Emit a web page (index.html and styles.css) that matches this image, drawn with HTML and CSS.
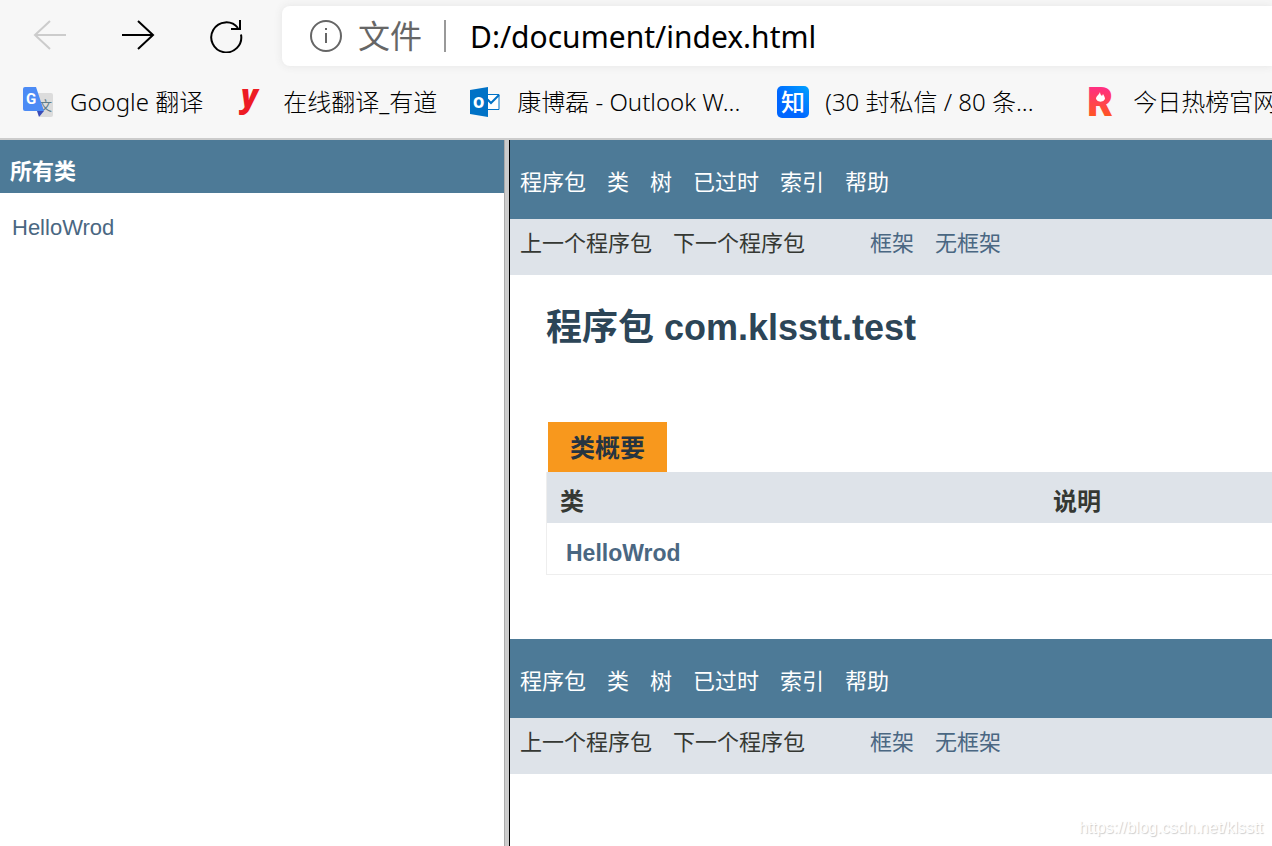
FILE: index.html
```html
<!DOCTYPE html>
<html lang="zh-CN">
<head>
  <meta charset="UTF-8" />
  <meta name="viewport" content="width=device-width, initial-scale=1.0"/>
  <title>com.klsstt.test</title>
  <link rel="stylesheet" href="styles.css">
</head>
<body>
  <header class="browser">
    <div class="toolbar">
      <button class="tool-btn" type="button" aria-label="后退" disabled>
        <svg width="34" height="34" viewBox="0 0 34 34"><path d="M33 16H2M17 2L2 16l15 14"/></svg>
      </button>
      <button class="tool-btn" type="button" aria-label="前进">
        <svg width="34" height="34" viewBox="0 0 34 34"><path d="M1 16h31M17 2l15 14-15 14"/></svg>
      </button>
      <button class="tool-btn" type="button" aria-label="刷新">
        <svg width="34" height="34" viewBox="0 0 34 34"><path d="M32 15.500a15 15 0 1 1-3-6.500M31 1v9h-9"/></svg>
      </button>
      <div class="address">
        <svg class="info" width="34" height="34" viewBox="0 0 34 34"><circle cx="17" cy="17" r="15"/><path d="M17 14v10M17 9v2"/></svg>
        <label for="url">文件</label>
        <input type="text" id="url" value="D:/document/index.html" />
      </div>
    </div>

    <nav class="bookmarks">
      <a href="#">
        <svg width="32" height="32" viewBox="0 0 32 32">
          <path d="M12 7h17a2 2 0 0 1 2 2v20a2 2 0 0 1-2 2H18z" fill="#dcdcdc"/>
          <text x="17" y="24" class="wen">文</text>
          <path d="M15 25h7l-5 6z" fill="#3a4cb8"/>
          <path d="M3 1h11l8 24H3a2 2 0 0 1-2-2V3a2 2 0 0 1 2-2z" fill="#4c8bf5"/>
          <text x="4" y="18" class="g">G</text>
        </svg>
        <span>Google 翻译</span>
      </a>
      <a href="#">
        <svg width="32" height="32" viewBox="0 0 32 32"><text x="6" y="21" class="youdao">y</text></svg>
        <span>在线翻译_有道</span>
      </a>
      <a class="clipped" href="#">
        <svg width="32" height="32" viewBox="0 0 32 32">
          <path d="M15 8.500h15v15H15" fill="#fff" stroke="#0072c6"/>
          <path d="M17 12l5 5 8-8" fill="none" stroke="#0072c6" stroke-width="2"/>
          <path d="M1 4l18-3v30L1 28z" fill="#0072c6"/>
          <text x="4" y="22" class="outlook">o</text>
        </svg>
        <span>康博磊 - Outlook W...</span>
      </a>
      <a class="clipped" href="#">
        <svg width="32" height="32" viewBox="0 0 32 32">
          <defs>
            <linearGradient id="zhi" x1="1" y1="0" x2="0" y2="1"><stop offset="0" stop-color="#00a2ff"/><stop offset="0.600" stop-color="#0066ff"/></linearGradient>
          </defs>
          <rect width="32" height="32" rx="5" fill="url(#zhi)"/>
          <text x="4" y="25" class="zhihu">知</text>
        </svg>
        <span>(30 封私信 / 80 条...</span>
      </a>
      <a href="#">
        <svg width="32" height="32" viewBox="0 0 32 32">
          <defs>
            <linearGradient id="hot" gradientUnits="userSpaceOnUse" x1="0" y1="2" x2="0" y2="30"><stop offset="0" stop-color="#ff3080"/><stop offset="1" stop-color="#ff5524"/></linearGradient>
          </defs>
          <text x="2" y="30" class="hot">R</text>
          <rect x="8" y="5" width="14" height="14" rx="4" fill="url(#hot)"/>
          <path d="M15 6c0 2 1 3 2 4l1-2c1 2 2 3 2 5a5 5 0 0 1-9 0c0-3 3-4 4-7z" fill="#fff"/>
        </svg>
        <span>今日热榜官网</span>
      </a>
    </nav>
  </header>

  <div class="frames">
    <aside class="classes">
      <h2>所有类</h2>
      <ul>
        <li><a href="#">HelloWrod</a></li>
      </ul>
    </aside>

    <main class="package">
      <nav class="top-nav">
        <a href="#">程序包</a>
        <a href="#">类</a>
        <a href="#">树</a>
        <a href="#">已过时</a>
        <a href="#">索引</a>
        <a href="#">帮助</a>
      </nav>
      <div class="sub-nav">
        <span>上一个程序包</span>
        <span>下一个程序包</span>
        <a class="frame-link" href="#">框架</a>
        <a href="#">无框架</a>
      </div>

      <div class="content">
        <h1>程序包 com.klsstt.test</h1>
        <table>
          <caption><span>类概要</span></caption>
          <thead>
            <tr><th class="col-first">类</th><th>说明</th></tr>
          </thead>
          <tbody>
            <tr><td><a href="#">HelloWrod</a></td><td></td></tr>
          </tbody>
        </table>
      </div>

      <nav class="top-nav">
        <a href="#">程序包</a>
        <a href="#">类</a>
        <a href="#">树</a>
        <a href="#">已过时</a>
        <a href="#">索引</a>
        <a href="#">帮助</a>
      </nav>
      <div class="sub-nav">
        <span>上一个程序包</span>
        <span>下一个程序包</span>
        <a class="frame-link" href="#">框架</a>
        <a href="#">无框架</a>
      </div>
    </main>
  </div>

  <div class="watermark">https://blog.csdn.net/klsstt</div>
</body>
</html>
```
FILE: styles.css
```css
* {
  box-sizing: border-box;
}

body {
  margin: 0;
  min-height: 100vh;
  display: flex;
  flex-direction: column;
  overflow: hidden;
  background: #fff;
  color: #353833;
  font-family: "Liberation Sans", "Noto Sans CJK SC", sans-serif;
  font-size: 22px;
}

a {
  color: #4a6782;
  text-decoration: none;
}

/* browser bar */
.browser {
  background: #f7f7f7;
  border-bottom: 2px solid #ccc;
  font-family: "Noto Sans", "Noto Sans CJK SC", sans-serif;
}

.toolbar {
  display: flex;
  align-items: center;
  height: 72px;
  padding-left: 33px;
}

.tool-btn {
  width: 34px;
  height: 34px;
  margin-right: 54px;
  padding: 0;
  border: none;
  background: none;
}

.tool-btn:last-of-type {
  margin-right: 39px;
}

.tool-btn svg,
.info {
  display: block;
  fill: none;
  stroke: #000;
  stroke-width: 2;
}

.tool-btn:disabled svg {
  stroke: #ccc;
}

.address {
  flex: 1;
  display: flex;
  align-items: center;
  height: 60px;
  padding-left: 27px;
  background: #fff;
  border-radius: 8px 0 0 8px;
  box-shadow: 0 0 8px #e4e4e4;
}

.address .info {
  stroke: #666;
}

.address label {
  margin-left: 15px;
  padding-right: 22px;
  border-right: 2px solid #999;
  color: #666;
  font-size: 32px;
  line-height: 32px;
}

.address input {
  flex: 1;
  min-width: 0;
  margin-left: 24px;
  padding: 0;
  border: none;
  background: none;
  color: #000;
  font-family: inherit;
  font-size: 30px;
}

.bookmarks {
  display: flex;
  gap: 32px;
  height: 66px;
  padding: 14px 0 0 22px;
  overflow: hidden;
}

.bookmarks a {
  display: flex;
  flex: none;
  gap: 16px;
  height: 32px;
  line-height: 32px;
  color: #000;
  font-size: 24px;
  font-weight: 300;
  white-space: nowrap;
}

.bookmarks .clipped {
  width: 276px;
}

.bookmarks text {
  font-family: Roboto, "Noto Sans CJK SC", sans-serif;
  font-weight: bold;
  fill: #fff;
}

.bookmarks .g {
  font-size: 15px;
}

.bookmarks .wen {
  font-size: 13px;
  font-weight: normal;
  fill: #607d8b;
}

.bookmarks .youdao {
  font-family: "Open Sans", sans-serif;
  font-size: 31px;
  font-weight: 800;
  font-style: italic;
  fill: #ed1c24;
}

.bookmarks .outlook {
  font-size: 20px;
}

.bookmarks .zhihu {
  font-size: 24px;
  font-weight: 500;
}

.bookmarks .hot {
  font-size: 40px;
  font-weight: 900;
  fill: url(#hot);
}

/* frames */
.frames {
  flex: 1;
  display: grid;
  grid-template-columns: 504px 1fr;
}

.classes h2 {
  margin: 0;
  padding: 15px 10px 5px;
  background: #4d7a97;
  color: #fff;
  font-size: 22px;
  line-height: 33px;
}

.classes ul {
  margin: 0;
  padding: 19px 12px;
  list-style: none;
  line-height: 32px;
}

.package {
  min-width: 0;
  border-left: 1px solid #000;
  box-shadow: -4px 0 #ccc, -5px 0 #aaa;
  margin-left: 5px;
}

.top-nav,
.sub-nav {
  display: flex;
  gap: 21px;
  padding: 0 10px;
  line-height: 32px;
  white-space: nowrap;
}

.top-nav {
  padding-top: 27px;
  padding-bottom: 20px;
  background: #4d7a97;
}

.top-nav a {
  color: #fff;
}

.sub-nav {
  padding-top: 9px;
  padding-bottom: 15px;
  background: #dee3e9;
}

.frame-link {
  margin-left: 44px;
}

.content {
  padding: 29px 0 64px 36px;
}

h1 {
  margin: 0 0 70px;
  color: #2c4557;
  font-size: 36px;
  line-height: 48px;
}

table {
  width: 100%;
  border-collapse: separate;
  border-spacing: 0;
  border-left: 1px solid #eee;
  border-bottom: 1px solid #eee;
}

caption {
  padding-left: 2px;
  text-align: left;
}

caption span {
  display: inline-block;
  padding: 2px 22px 0;
  background: #f8981d;
  color: #253441;
  font-size: 25px;
  font-weight: bold;
  line-height: 48px;
  vertical-align: top;
}

th {
  padding: 12px 13px 3px;
  background: #dee3e9;
  font-size: 24px;
  line-height: 36px;
  text-align: left;
}

.col-first {
  width: 68%;
}

td {
  padding: 14px 19px 5px;
  font-size: 23px;
  font-weight: bold;
  line-height: 32px;
}

.watermark {
  position: absolute;
  right: 9px;
  bottom: 9px;
  color: #fff;
  font-size: 16px;
  line-height: 18px;
  text-shadow: 1px 1px 1px #ccc;
}
```
